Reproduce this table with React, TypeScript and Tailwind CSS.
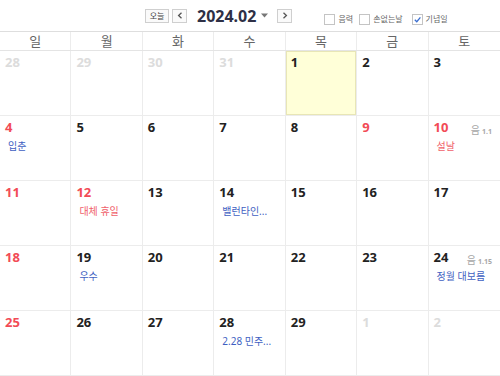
import React from "react";

type Cell = {
  n: number;
  other?: boolean;
  red?: boolean;
  today?: boolean;
  event?: string;
  eventRed?: boolean;
  lunar?: string;
};

const cells: Cell[] = [
  { n: 28, other: true }, { n: 29, other: true }, { n: 30, other: true }, { n: 31, other: true },
  { n: 1, today: true }, { n: 2 }, { n: 3 },
  { n: 4, red: true, event: "입춘" }, { n: 5 }, { n: 6 }, { n: 7 }, { n: 8 }, { n: 9, red: true },
  { n: 10, red: true, event: "설날", eventRed: true, lunar: "1.1" },
  { n: 11, red: true }, { n: 12, red: true, event: "대체 휴일", eventRed: true }, { n: 13 },
  { n: 14, event: "밸런타인..." }, { n: 15 }, { n: 16 }, { n: 17 },
  { n: 18, red: true }, { n: 19, event: "우수" }, { n: 20 }, { n: 21 }, { n: 22 }, { n: 23 },
  { n: 24, event: "정월 대보름", lunar: "1.15" },
  { n: 25, red: true }, { n: 26 }, { n: 27 }, { n: 28, event: "2.28 민주..." }, { n: 29 },
  { n: 1, other: true }, { n: 2, other: true },
];

const days = ["일", "월", "화", "수", "목", "금", "토"];

function Check({ checked, label }: { checked?: boolean; label: string }) {
  return (
    <div className="flex items-center gap-[3px]">
      <div className="w-[11px] h-[11px] border border-[#c4c4c4] bg-white flex items-center justify-center">
        {checked && (
          <svg width="9" height="9" viewBox="0 0 10 10">
            <path d="M2 5.2 L4.2 7.4 L8.2 2.6" fill="none" stroke="#3b6fd0" strokeWidth="1.5" />
          </svg>
        )}
      </div>
      <span className="text-[8px] text-[#666] leading-none">{label}</span>
    </div>
  );
}

export default function App() {
  return (
    <div
      className="w-[500px] h-[376px] bg-white overflow-hidden flex flex-col"
      style={{ fontFamily: '"Noto Sans", "Noto Sans CJK KR", sans-serif' }}
    >
      <div className="h-[32px] shrink-0 border-b border-[#dedede] flex items-center pl-[145px]">
        <div className="flex items-center">
          <div className="w-[24px] h-[14px] border border-[#cfcfcf] bg-[#fafafa] flex items-center justify-center text-[8px] leading-none text-[#444]">
            오늘
          </div>
          <div className="ml-[3px] w-[15px] h-[14px] border border-[#cfcfcf] bg-[#fafafa] flex items-center justify-center">
            <svg width="6" height="7" viewBox="0 0 6 7">
              <path d="M4.5 0.8 L1.6 3.5 L4.5 6.2" fill="none" stroke="#555" strokeWidth="1.3" />
            </svg>
          </div>
          <span className="ml-[10px] text-[16px] font-bold leading-none text-[#2e3046]">2024.02</span>
          <svg className="ml-[5px]" width="7" height="5" viewBox="0 0 7 5">
            <path d="M0 0.5 L7 0.5 L3.5 4.5 Z" fill="#777" />
          </svg>
          <div className="ml-[9px] w-[15px] h-[14px] border border-[#cfcfcf] bg-[#fafafa] flex items-center justify-center">
            <svg width="6" height="7" viewBox="0 0 6 7">
              <path d="M1.5 0.8 L4.4 3.5 L1.5 6.2" fill="none" stroke="#555" strokeWidth="1.3" />
            </svg>
          </div>
        </div>
        <div className="ml-[32px] mt-[7px] flex items-center gap-[6px]">
          <Check label="음력" />
          <Check label="손없는날" />
          <div className="ml-[3px]">
            <Check checked label="기념일" />
          </div>
        </div>
      </div>
      <div className="h-[19px] shrink-0 grid grid-cols-7 border-b border-[#e4e4e4]">
        {days.map((d, i) => (
          <div
            key={d}
            className={`flex items-center justify-center text-[13px] leading-none text-[#666] ${i < 6 ? "border-r border-[#ececec]" : ""}`}
          >
            {d}
          </div>
        ))}
      </div>
      <div className="flex-1 grid grid-cols-7 grid-rows-5">
        {cells.map((c, i) => {
          const col = i % 7;
          const numColor = c.other ? "text-[#dcdcdc]" : c.red ? "text-[#f24b56]" : "text-[#222]";
          return (
            <div
              key={i}
              className={`flex flex-col border-b border-[#ececec] pt-[1px] pl-[5px] pr-[8px] ${col < 6 ? "border-r" : ""} ${
                c.today ? "bg-[#ffffd8] shadow-[inset_0_0_0_1px_#e8e6b6]" : ""
              }`}
            >
              <div className="flex items-start justify-between h-[20px]">
                <span className={`text-[13px] font-bold leading-[20px] ${numColor}`}>{c.n}</span>
                {c.lunar && (
                  <span className="leading-[20px] text-[#a8a8a8] mt-[1px]">
                    <span className="text-[10px]">음</span>
                    <span className="text-[7px] font-bold ml-[2px]">{c.lunar}</span>
                  </span>
                )}
              </div>
              {c.event && (
                <div
                  className={`mt-[2px] pl-[3px] text-[10px] leading-[14px] whitespace-nowrap ${
                    c.eventRed ? "text-[#f0606a]" : "text-[#3f5fc2]"
                  }`}
                >
                  {c.event}
                </div>
              )}
            </div>
          );
        })}
      </div>
    </div>
  );
}
